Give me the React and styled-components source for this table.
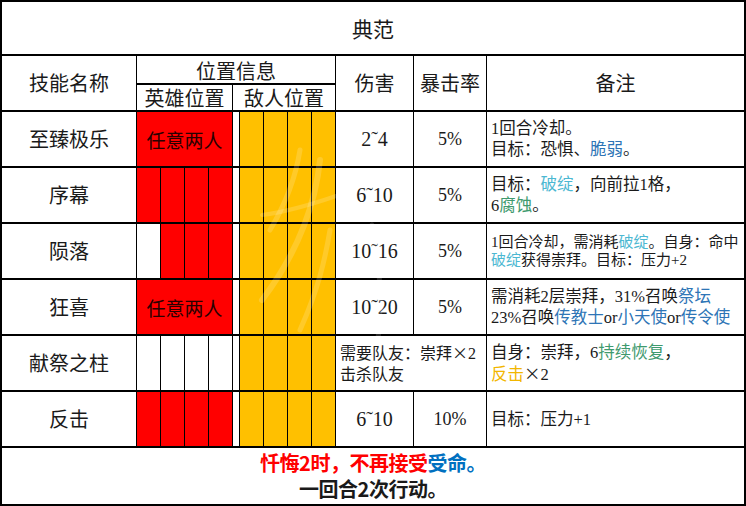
import React from 'react';
import styled, { createGlobalStyle } from 'styled-components';

const GlobalStyle = createGlobalStyle`
  html, body {
    margin: 0;
    padding: 0;
    background: #fff;
  }
  body {
    font-family: "Liberation Serif", "Noto Sans CJK SC", serif;
    color: #111;
  }
`;

const Sheet = styled.div`
  position: relative;
  width: 746px;
  height: 506px;
  box-sizing: border-box;
  padding: 2px;
  background: #000;
  display: grid;
  grid-template-columns: 134px repeat(4, 23px) 6px repeat(4, 23px) 77px 72px 257px;
  grid-template-rows: 52px 27px 25px repeat(6, 54px) 56px;
  column-gap: 1px;
  row-gap: 2px;
  overflow: hidden;
`;

const Cell = styled.div`
  grid-column: ${(p) => (p.$cols ? `span ${p.$cols}` : 'auto')};
  grid-row: ${(p) => (p.$rows ? `span ${p.$rows}` : 'auto')};
  background: ${(p) => p.$bg || '#fff'};
  display: flex;
  align-items: center;
  justify-content: ${(p) => (p.$left ? 'flex-start' : 'center')};
  padding: ${(p) => (p.$left ? '0 0 0 4px' : '0')};
  font-family: "Noto Sans CJK SC", sans-serif;
  font-size: ${(p) => p.$size || 20}px;
  color: ${(p) => p.$ink || '#1a1a1a'};
  line-height: 1;
  white-space: nowrap;
  overflow: hidden;
`;

const SubHead = styled(Cell)`
  font-size: 20px;
  overflow: visible;
  align-items: flex-end;
  padding-bottom: 2px;
`;

const Title = styled(Cell)`
  grid-column: 1 / -1;
  font-size: 21px;
`;

const Number = styled(Cell)`
  font-family: "Liberation Serif", serif;
`;

const Note = styled(Cell)`
  font-family: "Liberation Serif", "Noto Sans CJK SC", serif;
  font-size: ${(p) => p.$size || 16.5}px;
  line-height: ${(p) => (p.$size && p.$size < 16 ? 18 : 21)}px;
  display: block;
  align-self: stretch;
  padding: 0 0 0 4px;
  & > div {
    height: 100%;
    display: flex;
    flex-direction: column;
    justify-content: center;
  }
`;

const Footer = styled(Cell)`
  grid-column: 1 / -1;
  flex-direction: column;
  gap: 6px;
  font-family: "Noto Sans CJK SC", sans-serif;
  font-weight: 700;
  font-size: 20px;
  letter-spacing: -0.5px;
`;

const Ink = styled.span`
  color: ${(p) => p.$c};
`;

const Wide = styled.span`
  font-family: "Noto Sans CJK SC", sans-serif;
`;

const Watermark = styled.svg`
  position: absolute;
  left: 0;
  top: 0;
  pointer-events: none;
`;

const C = {
  red: '#ff0000',
  gold: '#ffc000',
  blue: '#2e75b6',
  cyan: '#4cb8d2',
  green: '#3f9a6e',
  amber: '#f2b600',
  navy: '#0070c0',
};

const rows = [
  {
    name: '至臻极乐',
    hero: 'any',
    dmg: '2˜4',
    crit: '5%',
    note: (
      <>
        <span>1回合冷却。</span>
        <span>目标：恐惧、<Ink $c={C.blue}>脆弱</Ink>。</span>
      </>
    ),
  },
  {
    name: '序幕',
    hero: [1, 1, 1, 1],
    dmg: '6˜10',
    crit: '5%',
    note: (
      <>
        <span>目标：<Ink $c={C.cyan}>破绽</Ink>，向前拉1格，</span>
        <span>6<Ink $c={C.green}>腐蚀</Ink>。</span>
      </>
    ),
  },
  {
    name: '陨落',
    hero: [0, 1, 1, 1],
    dmg: '10˜16',
    crit: '5%',
    small: true,
    note: (
      <>
        <span>1回合冷却，需消耗<Ink $c={C.cyan}>破绽</Ink>。自身：命中</span>
        <span><Ink $c={C.cyan}>破绽</Ink>获得崇拜。目标：压力+2</span>
      </>
    ),
  },
  {
    name: '狂喜',
    hero: 'any',
    dmg: '10˜20',
    crit: '5%',
    note: (
      <>
        <span>需消耗2层崇拜，31%召唤<Ink $c={C.blue}>祭坛</Ink></span>
        <span>
          23%召唤<Ink $c={C.blue}>传教士</Ink>or<Ink $c={C.blue}>小天使</Ink>or
          <Ink $c={C.blue}>传令使</Ink>
        </span>
      </>
    ),
  },
  {
    name: '献祭之柱',
    hero: [0, 0, 0, 0],
    merged: (
      <>
        <span>需要队友：崇拜<Wide>×</Wide>2</span>
        <span>击杀队友</span>
      </>
    ),
    note: (
      <>
        <span>自身：崇拜，6<Ink $c={C.green}>持续恢复</Ink>，</span>
        <span><Ink $c={C.amber}>反击</Ink><Wide>×</Wide>2</span>
      </>
    ),
  },
  {
    name: '反击',
    hero: [1, 1, 1, 1],
    dmg: '6˜10',
    crit: '10%',
    note: <span>目标：压力+1</span>,
  },
];

const SkillRow = ({ row }) => (
  <>
    <Cell>{row.name}</Cell>
    {row.hero === 'any' ? (
      <Cell $cols={4} $bg={C.red} $size={19} $ink="#2a0000">
        任意两人
      </Cell>
    ) : (
      row.hero.map((on, i) => <Cell key={i} $bg={on ? C.red : '#fff'} />)
    )}
    <Cell />
    {[0, 1, 2, 3].map((i) => (
      <Cell key={`e${i}`} $bg={C.gold} />
    ))}
    {row.merged ? (
      <Note $cols={2} $size={16}>
        <div>{row.merged}</div>
      </Note>
    ) : (
      <>
        <Number $size={20}>{row.dmg}</Number>
        <Number $size={18}>{row.crit}</Number>
      </>
    )}
    <Note $size={row.small ? 15 : undefined}>
      <div>{row.note}</div>
    </Note>
  </>
);

export default function App() {
  return (
    <>
      <GlobalStyle />
      <Sheet>
        <Title>典范</Title>

        <Cell $rows={2}>技能名称</Cell>
        <SubHead $cols={9}>位置信息</SubHead>
        <Cell $rows={2}>伤害</Cell>
        <Cell $rows={2}>暴击率</Cell>
        <Cell $rows={2}>备注</Cell>
        <SubHead $cols={4}>英雄位置</SubHead>
        <SubHead $cols={5}>敌人位置</SubHead>

        {rows.map((row) => (
          <SkillRow key={row.name} row={row} />
        ))}

        <Footer>
          <span>
            <Ink $c={C.red}>忏悔2时，不再接受</Ink>
            <Ink $c={C.navy}>受命。</Ink>
          </span>
          <span>一回合2次行动。</span>
        </Footer>

        <Watermark width="746" height="506" viewBox="0 0 746 506">
          <g fill="none" stroke="#fff" strokeOpacity="0.16" strokeLinecap="round">
            <path d="M300 150 C 296 175, 288 200, 270 230" strokeWidth="5" />
            <path d="M320 160 C 316 200, 300 250, 262 300" strokeWidth="6" />
            <path d="M262 215 C 285 212, 310 205, 336 196" strokeWidth="4" />
            <path d="M330 230 C 325 260, 318 290, 300 330" strokeWidth="5" />
            <path d="M372 225 C 380 260, 382 300, 378 340" strokeWidth="5" />
          </g>
        </Watermark>
      </Sheet>
    </>
  );
}
